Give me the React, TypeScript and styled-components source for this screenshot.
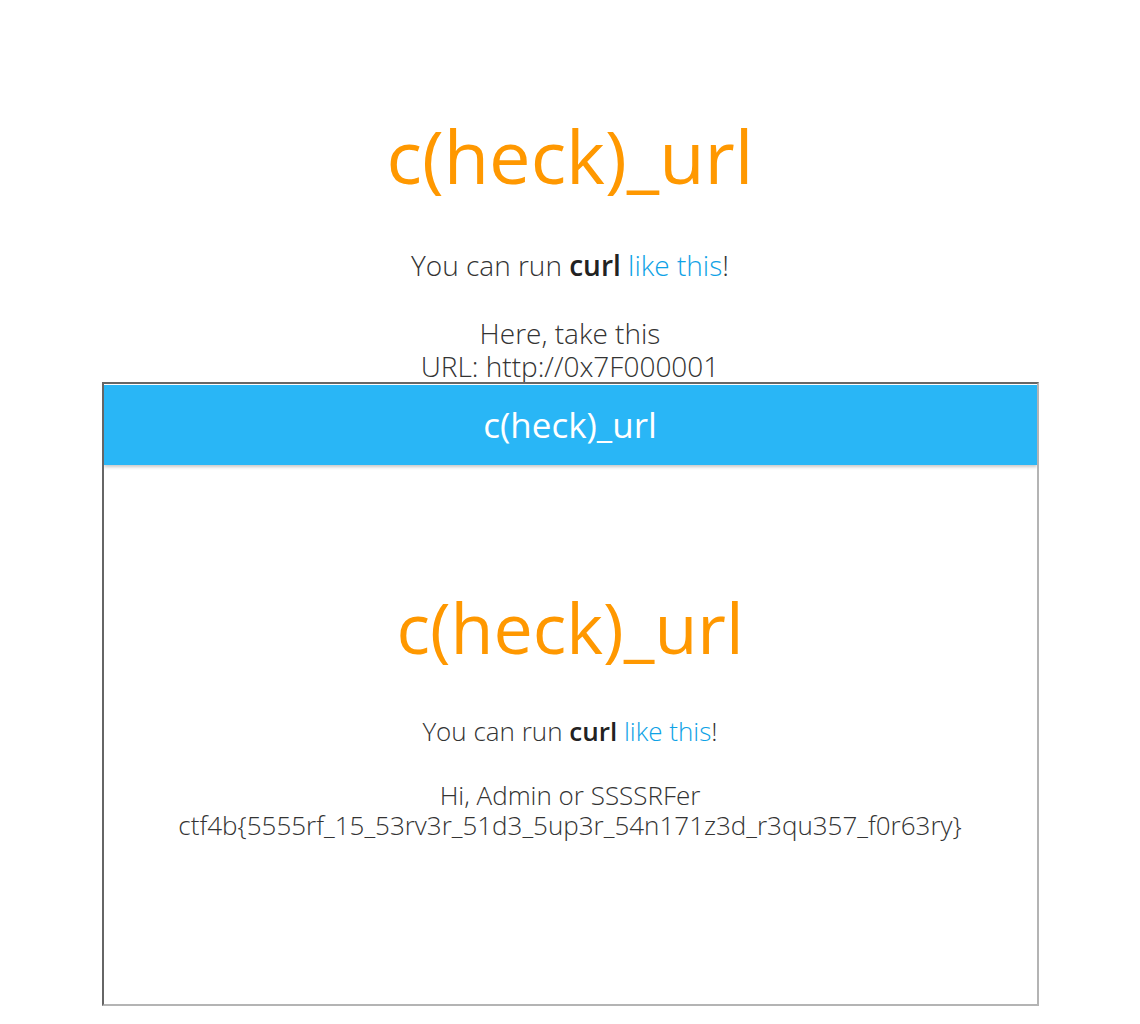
import * as React from "react"
import styled, { createGlobalStyle } from "styled-components"

const Global = createGlobalStyle`
    html, body { margin: 0; padding: 0; background: #fff; }
    body { font-family: "Open Sans", "Noto Sans", "Liberation Sans", sans-serif; color: #333; }
`

const Page = styled.div`
    display: flex; flex-direction: column; align-items: center;
    text-align: center;
    padding-top: 112px;
`
const Title = styled.h1<{ $size: number }>`
    margin: 0;
    font-weight: 400;
    font-size: ${p => p.$size}px;
    line-height: 1.2;
    color: #ff9800;
`
const Lead = styled.p<{ $size: number, $lh: number, $gap: number }>`
    margin: ${p => p.$gap}px 0 0;
    font-weight: 300;
    font-size: ${p => p.$size}px;
    line-height: ${p => p.$lh}px;
    color: #333;
    & b { font-weight: 600; color: #222; }
    & a { color: #0ea2e6; text-decoration: none; }
`
const Frame = styled.div`
    width: 937px; height: 624px; box-sizing: border-box;
    margin-top: -1px;
    border: 2px solid; border-color: #666 #b4b4b4 #b4b4b4 #666;
    padding-top: 1px;
    display: flex; flex-direction: column;
    overflow: hidden;
`
const Header = styled.div`
    height: 80px; flex-shrink: 0;
    background: #29b6f6;
    box-shadow: 0 2px 3px rgba(0,0,0,.22);
    display: flex; align-items: center; justify-content: center;
    color: #fff; font-size: 35px; font-weight: 400;
`
const Body = styled.div`
    display: flex; flex-direction: column; align-items: center;
    padding-top: 120px;
`

export default function App() {
    return <>
        <Global />
        <Page>
            <Title $size={74}>c(heck)_url</Title>
            <Lead $size={28} $lh={33} $gap={48}>You can run <b>curl</b> <a href="#">like this</a>!</Lead>
            <Lead $size={28} $lh={33} $gap={35}>Here, take this<br />URL: http://0x7F000001</Lead>
            <Frame>
                <Header>c(heck)_url</Header>
                <Body>
                    <Title $size={70}>c(heck)_url</Title>
                    <Lead $size={26} $lh={30} $gap={47}>You can run <b>curl</b> <a href="#">like this</a>!</Lead>
                    <Lead $size={26} $lh={30} $gap={34}>Hi, Admin or SSSSRFer<br />ctf4b{"{"}5555rf_15_53rv3r_51d3_5up3r_54n171z3d_r3qu357_f0r63ry{"}"}</Lead>
                </Body>
            </Frame>
        </Page>
    </>
}
